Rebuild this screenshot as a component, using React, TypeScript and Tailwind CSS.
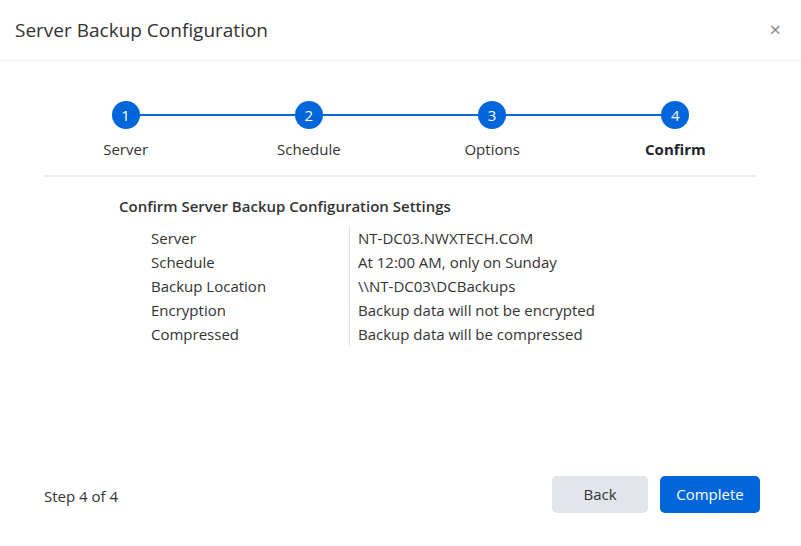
export default function App() {
  const steps = ["Server", "Schedule", "Options", "Confirm"];
  const rows = [
    ["Server", "NT-DC03.NWXTECH.COM"],
    ["Schedule", "At 12:00 AM, only on Sunday"],
    ["Backup Location", "\\\\NT-DC03\\DCBackups"],
    ["Encryption", "Backup data will not be encrypted"],
    ["Compressed", "Backup data will be compressed"],
  ];
  return (
    <div className="w-[801px] h-[546px] bg-white flex flex-col text-[#212529]" style={{ fontFamily: '"Open Sans", "Noto Sans", sans-serif' }}>
      <div className="h-[61px] border-b border-[#f0f0f0] flex items-center justify-between pl-[15px] pr-[20px]">
        <div className="text-[19px] text-[#333]">Server Backup Configuration</div>
        <div className="text-[20px] text-[#888] leading-none">×</div>
      </div>
      <div className="px-[44px] flex-1 flex flex-col">
        <div className="relative pt-[40px] h-[116px] border-b-2 border-[#eeeeee]">
          <div className="absolute left-[82px] right-[82px] top-[53px] h-[2px] bg-[#0b66d6]" />
          <div className="relative grid grid-cols-4 -mx-[10px]">
            {steps.map((s, i) => (
              <div key={s} className="flex flex-col items-center">
                <div className="w-[28px] h-[28px] rounded-full bg-[#0066d9] text-white text-[15px] flex items-center justify-center">{i + 1}</div>
                <div className={"mt-[9px] text-[15px] " + (i === 3 ? "font-bold" : "text-[#333]")}>{s}</div>
              </div>
            ))}
          </div>
        </div>
        <div className="pl-[75px] pt-[18px]">
          <div className="text-[15px] font-semibold text-[#333]">Confirm Server Backup Configuration Settings</div>
          <div className="flex mt-[8px] ml-[32px] text-[15px] text-[#333]">
            <div className="w-[199px] border-r border-[#e5e5e5] flex flex-col">
              {rows.map((r) => (
                <div key={r[0]} className="h-[24px] leading-[24px]">{r[0]}</div>
              ))}
            </div>
            <div className="pl-[8px] flex flex-col">
              {rows.map((r) => (
                <div key={r[0]} className="h-[24px] leading-[24px]">{r[1]}</div>
              ))}
            </div>
          </div>
        </div>
      </div>
      <div className="h-[100px] pr-[41px] pl-[44px] flex items-start pt-[30px] justify-between">
        <div className="text-[15px] text-[#333] mt-[9px]">Step 4 of 4</div>
        <div className="flex gap-[12px]">
          <button className="w-[96px] h-[37px] rounded-[5px] bg-[#e2e6ea] text-[15px] text-[#333]">Back</button>
          <button className="w-[100px] h-[37px] rounded-[5px] bg-[#0066d9] text-[15px] text-white">Complete</button>
        </div>
      </div>
    </div>
  );
}
